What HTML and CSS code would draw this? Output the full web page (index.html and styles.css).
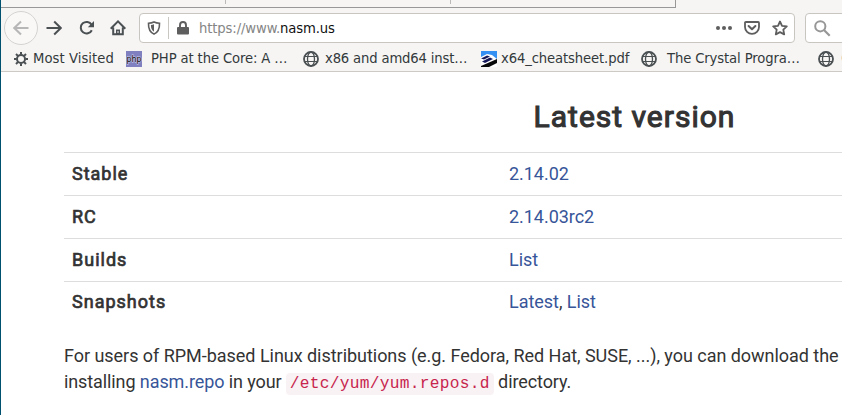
FILE: index.html
```
<!DOCTYPE html>
<html lang="en">
<head>
<meta charset="utf-8">
<title>NASM</title>
<link rel="stylesheet" href="styles.css">
</head>
<body>
<svg width="0" height="0" class="defs" aria-hidden="true">
  <symbol id="globe" viewBox="0 0 16 16"><g fill="none" stroke="#4b5053"><circle cx="8" cy="8" r="7" stroke-width="1.8"/><ellipse cx="8" cy="8" rx="3.5" ry="7" stroke-width="1.3"/><path d="M2 5.500h12M2 10.500h12" stroke-width="1.200"/></g></symbol>
</svg>
<div class="window">
  <header class="chrome">
    <div class="tabs"><div class="tab first"></div><div class="tab"></div><div class="tab last"></div></div>
    <nav class="toolbar">
      <span class="back"><svg width="16" height="16" viewBox="0 0 16 16"><path d="M15.5 8H1.5M8 1.5L1.3 8L8 14.5" fill="none" stroke="#b7b7b7" stroke-width="2"/></svg></span>
      <svg class="forward" width="16" height="16" viewBox="0 0 16 16"><path d="M.5 8H14.5M8.2 1.5L14.8 8L8.2 14.5" fill="none" stroke="#4b5053" stroke-width="2"/></svg>
      <svg class="reload" width="16" height="16" viewBox="0 0 16 16"><path d="M12.8 10.2A5.8 5.8 0 1 1 12.6 4.8" fill="none" stroke="#4b5053" stroke-width="2"/><path d="M15 1v6.2H8.8z" fill="#4b5053"/></svg>
      <svg class="home" width="16" height="16" viewBox="0 0 16 16"><path d="M.7 8.7L8 1.4L15.3 8.7M3.2 7.5V14.3H12.8V7.5" fill="none" stroke="#4b5053" stroke-width="2"/><path d="M6 14V9.5h4V14z" fill="#4b5053"/><path d="M8 11v2" stroke="#f6f5f4" stroke-width="1"/></svg>
      <div class="urlbar">
        <svg class="shield" width="14" height="14" viewBox="0 0 14 14"><path d="M7 .9C9 1.8 10.7 2.1 12.5 2.2C12.7 7.3 11.5 11 7 13.1C2.5 11 1.3 7.3 1.5 2.2C3.300 2.100 5 1.800 7 .9z" fill="none" stroke="#5e5e5e" stroke-width="1.6"/><path d="M7 3.300V10.700C4.700 9.300 3.900 7.200 3.900 4.100C5 4 6 3.700 7 3.300z" fill="#5e5e5e"/></svg>
        <i class="divider"></i>
        <svg class="lock" width="12" height="14" viewBox="0 0 12 14"><path d="M3 7V4.200a3 3.200 0 0 1 6 0V7" fill="none" stroke="#5e5e5e" stroke-width="1.900"/><rect y="6" width="12" height="7.500" rx="1" fill="#5e5e5e"/></svg>
        <span class="url">https://www.<b>nasm.us</b></span>
        <svg class="dots" width="16" height="6" viewBox="0 0 16 6"><g fill="#5e5e5e"><circle cx="2" cy="3" r="2"/><circle cx="8" cy="3" r="2"/><circle cx="14" cy="3" r="2"/></g></svg>
        <svg class="pocket" width="16" height="14" viewBox="0 0 16 14"><path d="M1.900 1H14.100Q15 1 15 1.900V6A7 6.900 0 0 1 1 6V1.900Q1 1 1.900 1z" fill="none" stroke="#5e5e5e" stroke-width="1.800"/><path d="M4.600 5L8 8.300L11.400 5" fill="none" stroke="#5e5e5e" stroke-width="2" stroke-linecap="round" stroke-linejoin="round"/></svg>
        <svg class="star" width="16" height="16" viewBox="0 0 16 16"><path d="M8 1.500L10 5.800L14.800 6.400L11.300 9.700L12.200 14.400L8 12.100L3.800 14.400L4.700 9.700L1.200 6.400L6 5.800z" fill="none" stroke="#5e5e5e" stroke-width="1.800" stroke-linejoin="round"/></svg>
      </div>
      <div class="search"><svg width="17" height="17" viewBox="0 0 17 17"><circle cx="6.300" cy="6.300" r="5.100" fill="none" stroke="#979797" stroke-width="2"/><path d="M10 10L15.700 15.700" stroke="#979797" stroke-width="2.200"/></svg></div>
    </nav>
    <div class="bookmarks">
      <span class="mark visited"><svg width="14" height="14" viewBox="0 0 14 14"><g stroke="#4b5053" fill="none"><circle cx="7" cy="7" r="4" stroke-width="2"/><path d="M7 0v2.500M7 11.500V14M0 7h2.500M11.500 7H14M2 2l1.900 1.900M10.100 10.100L12 12M12 2l-1.900 1.900M3.900 10.100L2 12" stroke-width="2"/></g></svg><span>Most Visited</span></span>
      <span class="mark php"><svg width="16" height="16" viewBox="0 0 16 16"><rect width="16" height="16" fill="#8080c0"/><text x="0.5" y="11" textLength="15" lengthAdjust="spacingAndGlyphs">php</text></svg><span>PHP at the Core: A …</span></span>
      <span class="mark x86"><svg width="16" height="16"><use href="#globe"/></svg><span>x86 and amd64 inst…</span></span>
      <span class="mark x64"><svg width="16" height="16" viewBox="0 0 16 16"><rect width="16" height="16" fill="#fff"/><path d="M0 0H16V8L11 4L6 3L0 6z" fill="#3590f4"/><path d="M0 7.500L6 4.500L9 5.500L3 8.500zM1 10.500L9 6.500L12 8L4 12z" fill="#15195a"/><path d="M0 15L16 8V12L8 16H0z" fill="#080808"/></svg><span>x64_cheatsheet.pdf</span></span>
      <span class="mark crystal"><svg width="16" height="16"><use href="#globe"/></svg><span>The Crystal Progra…</span></span>
      <span class="mark extra"><svg width="16" height="16"><use href="#globe"/></svg><span>C</span></span>
    </div>
  </header>
  <main>
    <h1>Latest version</h1>
    <table>
      <tr><th>Stable</th><td><a>2.14.02</a></td></tr>
      <tr><th>RC</th><td><a>2.14.03rc2</a></td></tr>
      <tr><th>Builds</th><td><a>List</a></td></tr>
      <tr class="final"><th>Snapshots</th><td><a>Latest</a>, <a>List</a></td></tr>
    </table>
    <p>For users of RPM-based Linux distributions (e.g. Fedora, Red Hat, SUSE, ...), you can download the<br><span class="line">installing <a>nasm.repo</a> in your <code>/etc/yum/yum.repos.d</code> directory.</span></p>
  </main>
</div>
</body>
</html>
```
FILE: styles.css
```
* { box-sizing: border-box; }
body { margin: 0; overflow: hidden; background: #fff; }
.defs { display: block; }
.window { width: 842px; height: 415px; overflow: hidden; border-left: 1px solid #005070; }
svg { display: block; flex: none; }
.chrome { height: 72px; background: #f6f5f4; border-bottom: 1px solid #cdcac6; font: 14.67px "DejaVu Sans Condensed", "DejaVu Sans", sans-serif; font-stretch: condensed; letter-spacing: -.12px; color: #33393b; }
.tabs { display: flex; width: 675px; height: 8px; border-bottom: 1px solid #989898; }
.tab { width: 225px; height: 4px; border-right: 1px solid #bcbab8; }
.tab.last { height: 8px; border-color: #989898; }
.toolbar { display: flex; align-items: center; height: 40px; width: 1000px; }
.back { display: grid; place-items: center; width: 34px; height: 34px; margin-left: 3px; border: 1px solid #d5d3d1; border-radius: 50%; background: #f9f8f7; }
.forward { margin-left: 8px; }
.reload { margin-left: 17px; }
.home { margin-left: 15px; }
.urlbar { display: flex; align-items: center; width: 656px; height: 30px; margin-left: 13px; border: 1px solid #c9c5c0; border-radius: 4px; background: #fff; }
.shield { margin-left: 7px; }
.divider { width: 1px; height: 22px; margin-left: 7px; background: #cac7c2; }
.lock { margin-left: 8px; }
.url { flex: 1; margin-left: 10px; padding-bottom: 2px; color: #858585; white-space: nowrap; }
.url b { font-weight: normal; color: #111; }
.pocket { margin-left: 12px; }
.star { margin: 0 6px 0 12px; }
.search { display: flex; align-items: center; width: 120px; height: 30px; margin-left: 10px; padding-left: 8px; border: 1px solid #c9c5c0; border-radius: 4px; background: #fff; }
.bookmarks { display: flex; height: 22px; align-items: center; width: 1000px; white-space: nowrap; }
.mark { display: flex; align-items: center; flex: none; }
.mark > span { line-height: 20px; padding-bottom: 2px; }
.visited { width: 112px; padding-left: 13px; gap: 5px; letter-spacing: .05px; }
.php { width: 189px; padding-left: 13px; gap: 9px; }
.php text { font: 9px "DejaVu Sans Condensed", sans-serif; fill: #000; stroke: #d8d8f0; stroke-width: 1px; paint-order: stroke; letter-spacing: 0; }
.x86 { width: 179px; padding-left: 1px; gap: 6px; letter-spacing: -.16px; }
.x64 { width: 160px; gap: 4px; }
.crystal { width: 177px; gap: 10px; }
.extra { gap: 7px; color: #a0a0a0; }
main { width: 1140px; margin-left: 63px; font: 18px/25.7px Roboto, sans-serif; letter-spacing: -.035px; color: #333; }
h1 { margin: 0; padding: 25px 0 0 1px; height: 80px; font-size: 30px; line-height: 40px; font-weight: 400; -webkit-text-stroke: 1.1px #333; letter-spacing: 1px; text-align: center; }
table { width: 1140px; border-collapse: collapse; table-layout: fixed; }
tr { height: 43px; }
th, td { padding: 8px; border-top: 1px solid #ddd; text-align: left; vertical-align: top; }
th { width: 437px; font-weight: 400; -webkit-text-stroke: .7px #333; letter-spacing: 1px; }
.final th, .final td { padding-top: 7px; }
a { color: #375599; }
p { margin: 18px 0 0; line-height: 26px; white-space: nowrap; }
.line { letter-spacing: -.1px; }
code { padding: 2px 4px; border-radius: 4px; background: #f9f2f4; color: #c7254e; font: 16.2px "Liberation Mono", monospace; letter-spacing: .28px; }
```
